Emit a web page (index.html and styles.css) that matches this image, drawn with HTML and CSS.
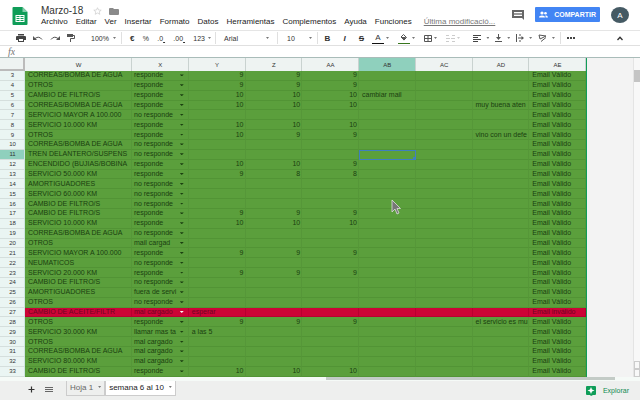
FILE: index.html
```
<!DOCTYPE html>
<html lang="es">
<head>
  <meta charset="UTF-8">
  <meta name="viewport" content="width=device-width, initial-scale=1.0">
  <title>Marzo-18</title>
  <link rel="stylesheet" href="styles.css">
</head>
<body>
  <header class="header">
    <svg class="logo" viewBox="0 0 15 18">
      <path fill="#0f9d58" d="M1 0h9l5 5v12a1 1 0 0 1-1 1H1a1 1 0 0 1-1-1V1a1 1 0 0 1 1-1z"/>
      <path fill="#87ceac" d="M10 0l5 5h-5z"/>
      <path fill="#fff" fill-rule="evenodd" d="M3 8h9v7H3zM4 9v1h3V9zM8 9v1h3V9zM4 11v1h3v-1zM8 11v1h3v-1zM4 13v1h3v-1zM8 13v1h3v-1z"/>
    </svg>
    <div class="doc">
      <div class="title-row">
        <h1 class="title">Marzo-18</h1>
        <button class="icon-btn" aria-label="Destacar"><svg width="9" height="8" viewBox="0 0 9 8"><path fill="none" stroke="#ccc" stroke-width=".7" d="M4.500.7l1 2.300 2.700.2-2 1.600.6 2.500-2.300-1.300-2.300 1.300.6-2.500-2-1.600 2.700-.2z"/></svg></button>
        <button class="icon-btn" aria-label="Mover a carpeta"><svg width="10" height="7" viewBox="0 0 10 7"><path fill="#8a8a8a" d="M0 1q0-1 1-1h3l1 1h4q1 0 1 1v4q0 1-1 1H1q-1 0-1-1z"/></svg></button>
      </div>
      <nav class="menu">
        <button>Archivo</button>
        <button>Editar</button>
        <button>Ver</button>
        <button>Insertar</button>
        <button>Formato</button>
        <button>Datos</button>
        <button>Herramientas</button>
        <button>Complementos</button>
        <button>Ayuda</button>
        <button>Funciones</button>
        <a class="last-edit" href="#">Última modificació...</a>
      </nav>
    </div>
    <div class="account">
      <button class="icon-btn" aria-label="Comentarios"><svg width="12" height="10" viewBox="0 0 12 10"><path fill="#666" fill-rule="evenodd" d="M0 0h12v10l-2-2H0zM2 2v4h8V2z"/><path fill="#999" d="M2 3h8v2H2z"/></svg></button>
      <button class="share">
        <svg width="9" height="7" viewBox="0 0 9 7"><circle cx="3" cy="2" r="1.600" fill="#fff"/><path fill="#fff" d="M0 6.500q0-2 3-2t3 2zM6.500 6.500h2.500q0-2-2.500-2.200z"/><circle cx="6.500" cy="2.200" r="1.300" fill="#fff"/></svg>
        COMPARTIR
      </button>
      <button class="avatar">A</button>
    </div>
  </header>

  <div class="toolbar">
    <div class="group group-file">
      <button aria-label="Imprimir"><svg width="10" height="8" viewBox="0 0 10 8"><path fill="#444" fill-rule="evenodd" d="M2 0h6v1.500H2zM1 2h8q1 0 1 1v3H8v2H2V6H0V3q0-1 1-1zM3 5v2h4V5z"/></svg></button>
      <button aria-label="Deshacer"><svg width="10" height="6" viewBox="0 0 10 6"><path fill="none" stroke="#555" d="M2 3.500Q6 .5 9 4.500"/><path fill="#555" d="M0 1v4h4z"/></svg></button>
      <button aria-label="Rehacer"><svg width="10" height="6" viewBox="0 0 10 6"><path fill="none" stroke="#555" d="M8 3.500Q4 .5 1 4.500"/><path fill="#555" d="M10 1v4H6z"/></svg></button>
      <button aria-label="Copiar formato"><svg width="8" height="8" viewBox="0 0 8 8"><path fill="#555" d="M0 0h6v3H0z"/><path fill="none" stroke="#555" d="M6 1.500h1.500v3H3.500V8"/></svg></button>
    </div>
    <button class="drop group-zoom">100% <i class="caret"></i></button>
    <div class="group group-number">
      <button class="strong">€</button>
      <button>%</button>
      <button>.0<u>&nbsp;</u></button>
      <button>.00<u>&nbsp;</u></button>
      <button>123 <i class="caret"></i></button>
    </div>
    <button class="drop group-font">Arial <i class="caret"></i></button>
    <button class="drop group-size">10 <i class="caret"></i></button>
    <div class="group group-style">
      <button class="strong">B</button>
      <button class="strong"><em>I</em></button>
      <button class="strong"><s>S</s></button>
      <button class="color-text">A</button>
      <i class="caret"></i>
      <button class="color-fill" aria-label="Color de relleno"><svg width="8" height="7" viewBox="0 0 8 7"><path fill="none" stroke="#555" d="M3.500.5l3 3-2.500 2.500-3-3z"/><path fill="#555" d="M1 3h5L4 6.500z"/></svg></button>
      <i class="caret"></i>
      <button aria-label="Bordes"><svg width="8" height="7" viewBox="0 0 8 7"><path fill="none" stroke="#555" d="M.5.5h7v6h-7zM4 .5v6M.5 3.500h7"/></svg></button>
      <i class="caret"></i>
      <button aria-label="Combinar celdas"><svg width="9" height="7" viewBox="0 0 9 7"><path fill="none" stroke="#ccc" d="M0 .5h3M6 .5h3M0 6.500h3M6 6.500h3M0 3.500h4M5 3.500h4"/></svg></button>
      <i class="caret pale"></i>
    </div>
    <div class="group group-align">
      <button aria-label="Alineación horizontal"><svg width="8" height="7" viewBox="0 0 8 7"><path stroke="#444" d="M0 .5h8M0 2.500h5M0 4.500h8M0 6.500h5"/></svg></button>
      <i class="caret"></i>
      <button aria-label="Alineación vertical"><svg width="7" height="8" viewBox="0 0 7 8"><path stroke="#555" d="M3.500 0v4M0 7.500h7"/><path fill="#555" d="M1 3h5L3.500 6z"/></svg></button>
      <i class="caret"></i>
      <button aria-label="Ajuste de texto"><svg width="8" height="8" viewBox="0 0 8 8"><path stroke="#555" d="M.5 0v8M4 0v2M4 6v2M2 4h5"/><path fill="#555" d="M5.500 2v4L8 4z"/></svg></button>
      <i class="caret"></i>
      <button aria-label="Rotación de texto"><svg width="9" height="8" viewBox="0 0 9 8"><path fill="none" stroke="#555" d="M1 1l7 1-6 3zM3 7.500l5-4"/></svg></button>
      <i class="caret"></i>
    </div>
    <button class="more" aria-label="Más"><svg width="8" height="2" viewBox="0 0 8 2"><path fill="#444" d="M0 0h2v2H0zM3 0h2v2H3zM6 0h2v2H6z"/></svg></button>
    <button class="collapse" aria-label="Ocultar menús"><svg width="6" height="5" viewBox="0 0 6 5"><path fill="none" stroke="#333" stroke-width="1.300" d="M.5 4L3 1.200 5.500 4"/></svg></button>
  </div>

  <label class="formula"><span>fx</span><input type="text" aria-label="Barra de fórmulas"></label>

  <main class="sheet">
    <table class="grid">
      <colgroup>
        <col class="col-num"><col class="col-w"><col><col><col><col><col><col><col><col>
      </colgroup>
      <thead>
        <tr><th class="corner"></th><th>W</th><th>X</th><th>Y</th><th>Z</th><th>AA</th><th class="active">AB</th><th>AC</th><th>AD</th><th>AE</th></tr>
      </thead>
      <tbody id="rows"></tbody>
    </table>
    <div class="scroll-y"><div class="thumb-y"></div><div class="arrows-y"><i></i><i></i></div></div>
    <svg class="cursor" width="10" height="16" viewBox="0 0 10 16"><path fill="#777" stroke="#ddd" stroke-width=".8" d="M1 1v12l3-3 2 5 2-1-2-4.500h3.500z"/></svg>
  </main>
  <div class="scroll-x"><div class="thumb-x"></div></div>

  <footer class="footer">
    <button class="add" aria-label="Añadir hoja"><svg width="7" height="7" viewBox="0 0 7 7"><path stroke="#333" stroke-width="1.200" d="M3.500.5v6M.5 3.500h6"/></svg></button>
    <button class="list" aria-label="Todas las hojas"><svg width="8" height="6" viewBox="0 0 8 6"><path stroke="#666" d="M0 .5h8M0 2.500h8M0 4.500h8"/></svg></button>
    <button class="tab">Hoja 1 <i class="caret"></i></button>
    <button class="tab tab-active">semana 6 al 10 <i class="caret"></i></button>
    <button class="explore">
      <svg width="10" height="10" viewBox="0 0 10 10"><path fill="#0f9d58" d="M1 0h8q1 0 1 1v7q0 1-1 1H7l-2 1-1-1H1q-1 0-1-1V1q0-1 1-1z"/><path fill="#fff" d="M5 1l1 2.500L8.500 4.500 6 5.500 5 8 4 5.500 1.500 4.500 4 3.500z"/></svg>
      Explorar
    </button>
  </footer>

  <script src="script.js"></script>
</body>
</html>
```
FILE: styles.css
```
* {
  box-sizing: border-box;
}

body {
  display: flex;
  flex-direction: column;
  height: 100vh;
  margin: 0;
  overflow: hidden;
  background: #fff;
  color: #333;
  font-family: "Liberation Sans", Arial, sans-serif;
  font-size: 8px;
}

button {
  display: flex;
  align-items: center;
  padding: 0;
  border: 0;
  background: none;
  color: inherit;
  font: inherit;
  white-space: nowrap;
}

svg {
  display: block;
  flex: none;
}

.header {
  display: flex;
  padding: 5px 11px 0 12px;
  height: 30px;
}

.logo {
  width: 16px;
  height: 18px;
  margin-top: 2px;
}

.doc {
  flex: 1;
  margin-left: 13px;
}

.title-row {
  display: flex;
  align-items: center;
  gap: 7px;
  height: 12px;
}

.title {
  margin: 0 3px 0 0;
  font-size: 10px;
  font-weight: normal;
  line-height: 12px;
}

.menu {
  display: flex;
  gap: 8px;
  line-height: 10px;
  color: #222;
}

.last-edit {
  margin-left: 4px;
  color: #777;
}

.account {
  display: flex;
  align-items: flex-start;
  padding-top: 2px;
}

.account .icon-btn {
  margin: 3px 11px 0 0;
}

.share {
  gap: 6px;
  height: 15px;
  padding: 0 4px;
  margin-right: 11px;
  border-radius: 1px;
  background: #4285f4;
  color: #fff;
  font-size: 7px;
  font-weight: bold;
}

.avatar {
  justify-content: center;
  width: 18px;
  height: 16px;
  border-radius: 50%;
  background: #455a64;
  color: #fff;
}

.toolbar {
  display: flex;
  align-items: center;
  height: 16px;
  padding: 0 17px 0 16px;
  border-top: 1px solid #e5e5e5;
  border-bottom: 1px solid #e0e0e0;
  font-size: 7px;
}

.group {
  display: flex;
  align-items: center;
}

.group-file {
  gap: 7px;
  width: 75px;
}

.caret {
  flex: none;
  width: 3px;
  height: 2px;
  background: #777;
  clip-path: polygon(0 0, 100% 0, 50% 100%);
}

.drop {
  justify-content: space-between;
  height: 12px;
  border-right: 1px solid #e0e0e0;
}

.group-zoom {
  width: 31px;
  padding-right: 5px;
}

.group-number {
  justify-content: space-between;
  width: 94px;
  height: 12px;
  padding: 0 4px 0 8px;
  border-right: 1px solid #e0e0e0;
}

.group-number .caret {
  margin-left: 3px;
}

.group-font {
  width: 62px;
  padding: 0 8px;
}

.group-size {
  width: 40px;
  padding: 0 5px 0 9px;
}

.strong {
  font-size: 8px;
  font-weight: bold;
}

.group-style {
  width: 146px;
  padding-left: 1px;
}

.group-style .strong {
  justify-content: center;
  width: 17px;
}

.group-style .caret {
  margin: 0 9px 0 2px;
}

.group-style .pale {
  margin-right: 0;
  background: #ccc;
}

.color-text,
.color-fill {
  justify-content: center;
  width: 12px;
  height: 11px;
  border-bottom: 1px solid #111;
  font-size: 8px;
}

.color-text {
  margin-left: 2px;
}

.color-fill {
  border-color: #38761d;
}

.group-align {
  justify-content: space-between;
  width: 97px;
  height: 12px;
  padding: 0 5px 0 9px;
  border-right: 1px solid #e0e0e0;
}

.more {
  margin-left: 6px;
}

.collapse {
  margin-left: auto;
}

.formula {
  display: flex;
  align-items: center;
  height: 11px;
  padding-left: 8px;
  color: #777;
  font: italic 10px/10px "Liberation Serif", serif;
}

.formula input {
  flex: 1;
  height: 9px;
  border: 0;
  outline: 0;
}

.sheet {
  position: relative;
  display: flex;
  justify-content: space-between;
  flex: 1;
  min-height: 0;
  background: #f3f3f3;
  border-top: 1px solid #a9bcb9;
}

.grid {
  width: 587px;
  height: 100%;
  table-layout: fixed;
  border-spacing: 0;
  border-right: 1px solid #0f9d58;
}

.col-num {
  width: 25px;
}

.col-w {
  width: 107px;
}

.grid th,
.grid td {
  padding: 0 1px 0 2px;
  overflow: hidden;
  white-space: nowrap;
  font-size: 7px;
  line-height: 8px;
}

.grid thead th {
  height: 13px;
  border-right: 1px solid #c9d2d0;
  background: #eef3f2;
  font-size: 6px;
  font-weight: normal;
}

.grid thead .corner {
  border-right: 2px solid #bbb;
  border-bottom: 2px solid #bbb;
}

.grid thead .active,
.grid tbody .active {
  background: #8fd0bd;
}

.grid tbody th {
  border-right: 1px solid #cfe5e0;
  border-bottom: 1px solid #d5dfdd;
  background: #eaf5f3;
  font-size: 6px;
  font-weight: normal;
}

.grid td {
  padding-left: 3px;
  border-right: 1px solid #569739;
  border-bottom: 1px solid #529435;
  background: #5b9f3c;
  color: #1a4010;
}

.grid .number {
  text-align: right;
}

.grid .status {
  padding-left: 2px;
}

.grid .status div {
  display: flex;
  align-items: center;
  justify-content: space-between;
}

.grid .status .caret {
  width: 4px;
  margin-right: 3px;
  background: #1b4010;
}

.grid .red td {
  border-color: #b80030;
  background: #cc0436;
  color: #6e0622;
}

.grid .red .caret {
  background: #fff;
}

.grid .selected {
  border: 1px solid #3f7fc0;
  background: linear-gradient(#3f7fc0, #3f7fc0) right bottom / 2px 2px no-repeat #5b9f3c;
}

.scroll-y {
  display: flex;
  flex-direction: column;
  width: 7px;
  padding-top: 12px;
  border-left: 1px solid #e4e4e4;
  background: #f8f8f8;
}

.thumb-y {
  height: 12px;
  background: #c4c4c4;
}

.arrows-y {
  margin-top: auto;
}

.arrows-y i {
  display: block;
  height: 8px;
  border: 1px solid #ccc;
}

.cursor {
  position: absolute;
  left: 391px;
  top: 141px;
}

.scroll-x {
  height: 4px;
  padding: 0 25px 0 326px;
  background: #f5faf7;
}

.thumb-x {
  width: 100%;
  height: 3px;
  background: #c3cbc6;
}

.footer {
  display: flex;
  align-items: flex-start;
  height: 19px;
  padding: 0 11px 0 28px;
  background: #eeefee;
}

.add,
.list {
  height: 17px;
}

.list {
  margin: 0 13px 0 10px;
}

.tab {
  gap: 5px;
  height: 15px;
  padding: 0 3px 2px;
  border: 1px solid #ccc;
  border-top: 0;
  color: #666;
}

.tab-active {
  background: #fff;
  color: #222;
}

.explore {
  gap: 7px;
  height: 19px;
  margin-left: auto;
  color: #0f8a50;
  font-size: 7px;
}
```
FILE: script.js
```
// row number, W, X, Y, Z, AA, AB, AC, AD
const rows = [
  [3, 'CORREAS/BOMBA DE AGUA', 'responde', 9, 9, 9],
  [4, 'OTROS', 'responde', 9, 9, 9],
  [5, 'CAMBIO DE FILTRO/S', 'responde', 10, 10, 10, 'cambiar mail'],
  [6, 'CORREAS/BOMBA DE AGUA', 'responde', 10, 10, 10, '', '', 'muy buena aten'],
  [7, 'SERVICIO MAYOR A 100.000', 'no responde'],
  [8, 'SERVICIO 10.000 KM', 'responde', 10, 10, 10],
  [9, 'OTROS', 'responde', 10, 9, 9, '', '', 'vino con un defe'],
  [10, 'CORREAS/BOMBA DE AGUA', 'no responde'],
  [11, 'TREN DELANTERO/SUSPENS', 'no responde'],
  [12, 'ENCENDIDO (BUJIAS/BOBINA', 'responde', 10, 10, 9],
  [13, 'SERVICIO 50.000 KM', 'responde', 9, 8, 8],
  [14, 'AMORTIGUADORES', 'no responde'],
  [15, 'SERVICIO 60.000 KM', 'no responde'],
  [16, 'CAMBIO DE FILTRO/S', 'no responde'],
  [17, 'CAMBIO DE FILTRO/S', 'responde', 9, 9, 9],
  [18, 'SERVICIO 10.000 KM', 'responde', 10, 10, 10],
  [19, 'CORREAS/BOMBA DE AGUA', 'no responde'],
  [20, 'OTROS', 'mail cargad'],
  [21, 'SERVICIO MAYOR A 100.000', 'responde', 9, 9, 9],
  [22, 'NEUMATICOS', 'no responde'],
  [23, 'SERVICIO 20.000 KM', 'responde', 9, 9, 9],
  [24, 'CAMBIO DE FILTRO/S', 'no responde'],
  [25, 'AMORTIGUADORES', 'fuera de servi'],
  [26, 'OTROS', 'no responde'],
  [27, 'CAMBIO DE ACEITE/FILTR', 'mal cargado', 'esperar'],
  [28, 'OTROS', 'responde', 9, 9, 9, '', '', 'el servicio es mu'],
  [29, 'SERVICIO 30.000 KM', 'llamar mas ta', 'a las 5'],
  [30, 'OTROS', 'mal cargado'],
  [31, 'CORREAS/BOMBA DE AGUA', 'mal cargado'],
  [32, 'SERVICIO 80.000 KM', 'mal cargado'],
  [33, 'CAMBIO DE FILTRO/S', 'responde', 10, 10, 10]
];

const body = document.getElementById('rows');

rows.forEach(row => {
  const tr = document.createElement('tr');
  if (row[0] === 27) tr.className = 'red';
  let html = `<th class="${row[0] === 11 ? 'active' : ''}">${row[0]}</th><td>${row[1]}</td>`;
  html += `<td class="status"><div><span>${row[2]}</span><i class="caret"></i></div></td>`;
  for (let i = 3; i < 9; i++) {
    const value = row[i] || '';
    let name = typeof value === 'number' ? 'number' : '';
    if (row[0] === 11 && i === 6) name = 'selected';
    html += `<td class="${name}">${value}</td>`;
  }
  html += `<td>${row[0] === 27 ? 'Email inválido' : 'Email Válido'}</td>`;
  tr.innerHTML = html;
  body.appendChild(tr);
});
```
